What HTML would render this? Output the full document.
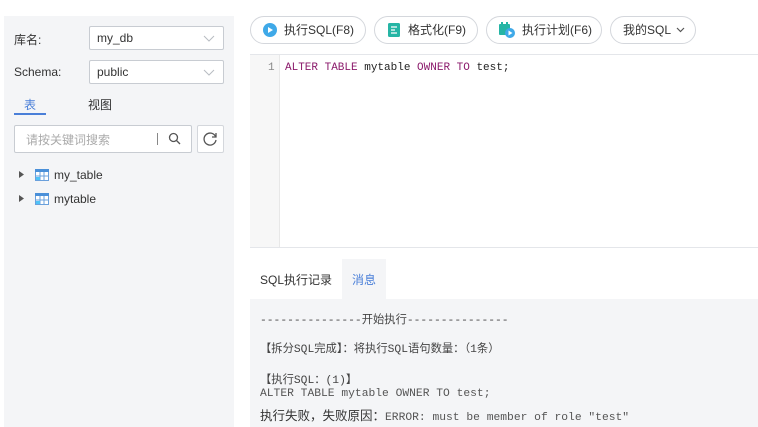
<!DOCTYPE html>
<html><head><meta charset="utf-8"><style>
*{box-sizing:border-box;margin:0;padding:0}
body{width:758px;height:427px;background:#fff;font-family:"Liberation Sans","Noto Sans CJK SC",sans-serif;font-size:12px;color:#333;position:relative;overflow:hidden}
.abs{position:absolute}
.left{left:4px;top:16px;width:230px;height:411px;background:#f4f5f7}
.lbl{font-size:12px;color:#333}
.sel{background:#fff;border:1px solid #c8ccd2;border-radius:2px;height:24px;width:135px;padding-left:7px;line-height:22px;font-size:12px;color:#333}
.sel svg{position:absolute;right:8px;top:8px}
.btn{top:16px;height:28px;border:1px solid #d4d7dc;border-radius:14px;background:#fff;font-size:12px;color:#333;line-height:26px;display:flex;align-items:center;padding-left:12px}
.btn span{margin-left:7px}
.mono{font-family:"Liberation Mono","Noto Sans CJK SC",monospace}
.kw{color:#8b1a6b}
.msg{left:250px;top:299px;width:508px;height:128px;background:#f4f5f7;color:#444}
.m{font-size:11.3px;color:#444;white-space:pre}
</style></head><body>
<div class="abs left"></div>
<div class="abs lbl" style="left:14px;top:31px">库名:</div>
<div class="abs sel" style="left:89px;top:26px">my_db<svg width="12" height="7"><path d="M1 1l5 5 5-5" stroke="#b8bcc2" fill="none"/></svg></div>
<div class="abs lbl" style="left:14px;top:65px">Schema:</div>
<div class="abs sel" style="left:89px;top:60px">public<svg width="12" height="7"><path d="M1 1l5 5 5-5" stroke="#b8bcc2" fill="none"/></svg></div>
<div class="abs" style="left:24px;top:96px;color:#4a7fd8;font-size:12px">表</div>
<div class="abs" style="left:14px;top:113px;width:32px;height:2px;background:#4a7fd8"></div>
<div class="abs" style="left:88px;top:96px;font-size:12px;color:#333">视图</div>
<div class="abs" style="left:14px;top:125px;width:178px;height:28px;background:#fff;border:1px solid #c8ccd2;border-radius:2px"></div>
<div class="abs" style="left:26px;top:131px;color:#aaa;font-size:12px">请按关键词搜索</div>
<div class="abs" style="left:157px;top:133px;width:1px;height:12px;background:#888"></div>
<svg class="abs" style="left:168px;top:132px" width="13" height="13"><circle cx="5.5" cy="5.5" r="4" stroke="#555" stroke-width="1.3" fill="none"/><path d="M8.5 8.5l3.5 3.5" stroke="#555" stroke-width="1.3"/></svg>
<div class="abs" style="left:197px;top:125px;width:27px;height:28px;background:#fff;border:1px solid #d4d7dc;border-radius:2px"></div>
<svg class="abs" style="left:203px;top:131px" width="15" height="15"><path d="M12.5 5.5A6 6 0 1 0 13 9" stroke="#555" stroke-width="1.3" fill="none"/><path d="M13 2v4h-4" stroke="#555" stroke-width="1.3" fill="none"/></svg>
<svg class="abs" style="left:19px;top:171px" width="5" height="7"><path d="M0 0l5 3.5-5 3.5z" fill="#555"/></svg>
<svg class="abs" style="left:35px;top:169px" width="14" height="12"><rect x=".5" y=".5" width="13" height="11" fill="#fff" stroke="#6aa0dc"/><rect x="0" y="0" width="14" height="3" fill="#4a90d9"/><path d="M0 7h14M5 3v9M9 3v9" stroke="#6aa0dc"/><rect x="1" y="8" width="4" height="3" fill="#4fc3f7"/></svg>
<div class="abs" style="left:54px;top:168px;font-size:12px">my_table</div>
<svg class="abs" style="left:19px;top:195px" width="5" height="7"><path d="M0 0l5 3.5-5 3.5z" fill="#555"/></svg>
<svg class="abs" style="left:35px;top:193px" width="14" height="12"><rect x=".5" y=".5" width="13" height="11" fill="#fff" stroke="#6aa0dc"/><rect x="0" y="0" width="14" height="3" fill="#4a90d9"/><path d="M0 7h14M5 3v9M9 3v9" stroke="#6aa0dc"/><rect x="1" y="8" width="4" height="3" fill="#4fc3f7"/></svg>
<div class="abs" style="left:54px;top:192px;font-size:12px">mytable</div>

<div class="abs btn" style="left:250px;width:116px"><svg width="14" height="14"><circle cx="7" cy="7" r="7" fill="#3fa9e8"/><path d="M5 4l5 3-5 3z" fill="#fff"/></svg><span>执行SQL(F8)</span></div>
<div class="abs btn" style="left:374px;width:104px"><svg width="14" height="14"><rect x="1" y="0" width="12" height="14" rx="1.5" fill="#26b5a5"/><path d="M4 4h6M4 7h4M4 10h6" stroke="#fff" stroke-width="1.3"/></svg><span>格式化(F9)</span></div>
<div class="abs btn" style="left:486px;width:116px"><svg width="16" height="16"><rect x="0" y="2" width="11" height="11" rx="1" fill="#26b5a5"/><path d="M3 0v4M8 0v4" stroke="#26b5a5" stroke-width="2"/><circle cx="11" cy="11" r="5" fill="#3fa9e8"/><path d="M9.5 8.5l4 2.5-4 2.5z" fill="#fff"/></svg><span>执行计划(F6)</span></div>
<div class="abs btn" style="left:610px;width:86px"><span style="margin-left:0">我的SQL</span><svg style="margin-left:5px" width="9" height="6"><path d="M1 1l3.5 3.5L8 1" stroke="#555" fill="none" stroke-width="1.2"/></svg></div>

<div class="abs" style="left:250px;top:54px;width:508px;height:194px;border-top:1px solid #e4e6ea;border-bottom:1px solid #e4e6ea;background:#fff"></div>
<div class="abs" style="left:250px;top:55px;width:30px;height:192px;background:#f7f7f7;border-right:1px solid #e8e8e8"></div>
<div class="abs mono" style="left:268px;top:62px;font-size:11px;color:#888">1</div>
<div class="abs mono" style="left:285px;top:62px;font-size:11px;color:#222;white-space:pre"><span class="kw">ALTER TABLE</span> mytable <span class="kw">OWNER TO</span> test;</div>

<div class="abs" style="left:342px;top:259px;width:44px;height:40px;background:#f4f5f7"></div>
<div class="abs" style="left:260px;top:271px;font-size:12px;color:#333">SQL执行记录</div>
<div class="abs" style="left:352px;top:271px;font-size:12px;color:#4a7fd8">消息</div>
<div class="abs msg"></div>
<div class="abs mono m" style="left:260px;top:311px">---------------开始执行---------------</div>
<div class="abs mono m" style="left:260px;top:340px">【拆分SQL完成】：将执行SQL语句数量：（1条）</div>
<div class="abs mono m" style="left:260px;top:371px">【执行SQL：(1)】</div>
<div class="abs mono m" style="left:260px;top:388px;color:#555">ALTER TABLE mytable OWNER TO test;</div>
<div class="abs mono m" style="left:260px;top:405px;color:#555"><span style="font-family:'Noto Sans CJK SC',sans-serif;font-size:12.5px;color:#333">执行失败，失败原因：</span>ERROR: must be member of role "test"</div>
</body></html>
